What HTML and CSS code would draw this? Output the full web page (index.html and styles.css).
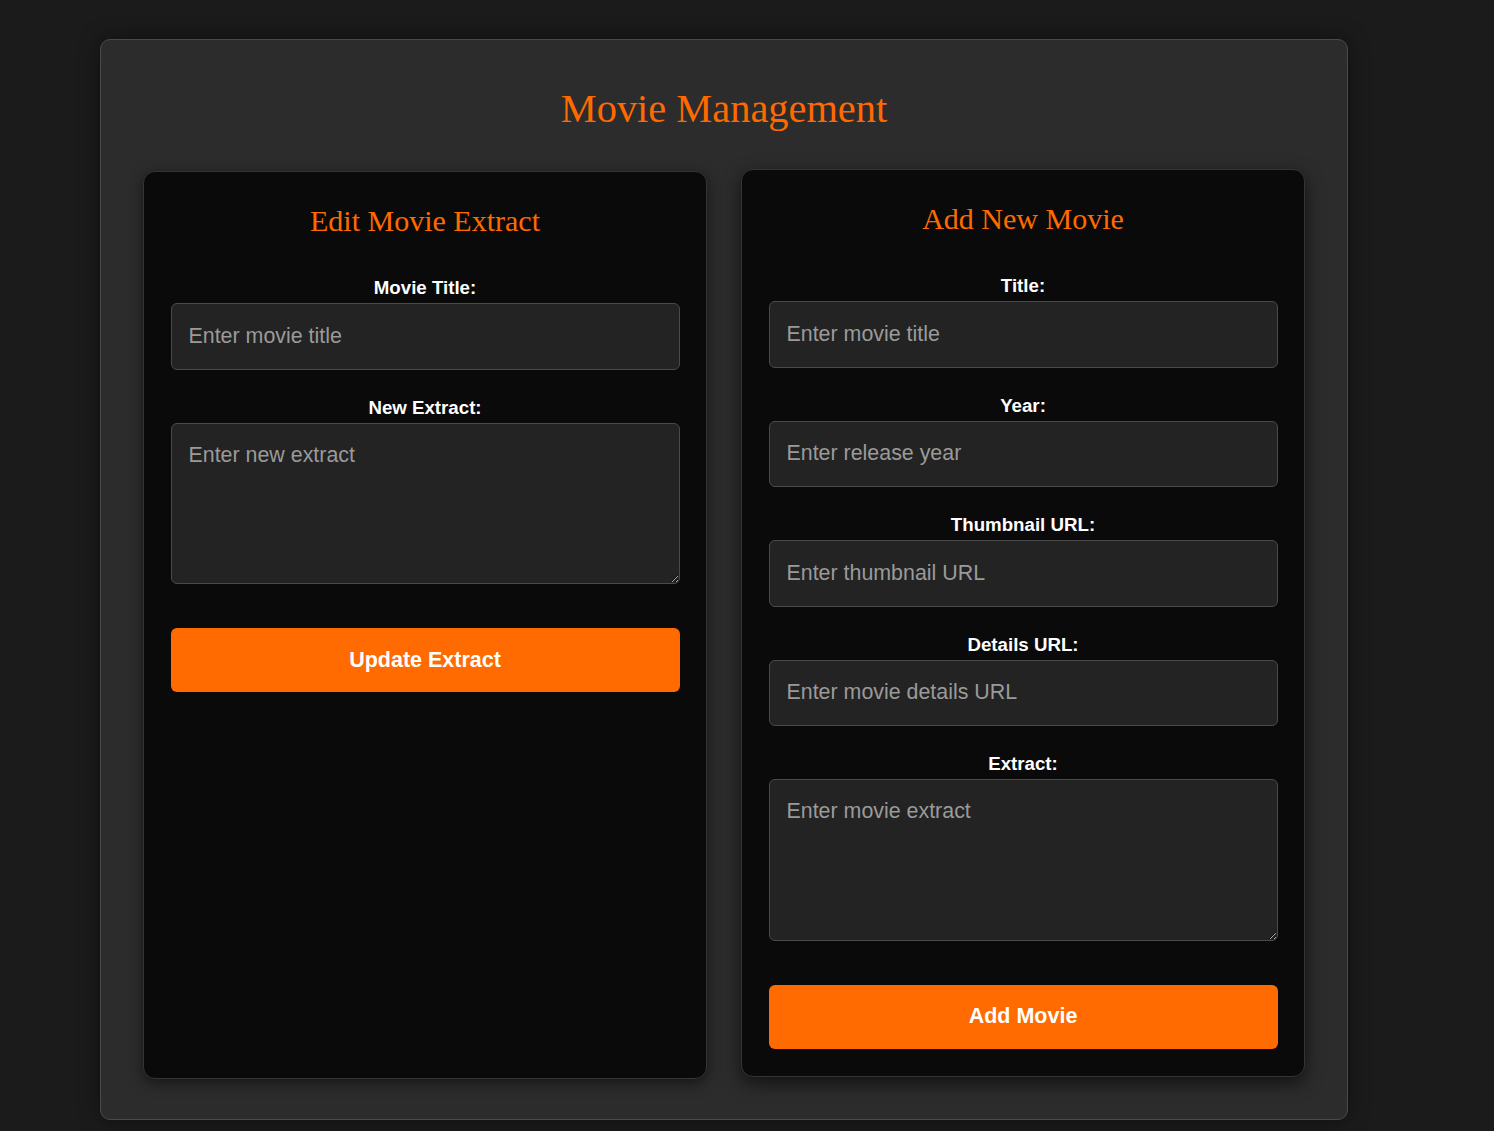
FILE: index.html
```html
<!DOCTYPE html>
<html lang="en">
<head>
<meta charset="utf-8">
<title>Movie Management</title>
<link rel="stylesheet" href="styles.css">
</head>
<body>
<div class="container">
  <h1 class="page-title">Movie Management</h1>
  <div class="panels">
    <section class="card">
      <h2 class="card-title">Edit Movie Extract</h2>
      <form class="form">
        <div class="group">
          <label class="label" for="edit-title">Movie Title:</label>
          <input class="field" id="edit-title" type="text" placeholder="Enter movie title">
        </div>
        <div class="group">
          <label class="label" for="edit-extract">New Extract:</label>
          <textarea class="field area" id="edit-extract" placeholder="Enter new extract"></textarea>
        </div>
        <button class="btn" type="button">Update Extract</button>
      </form>
    </section>
    <section class="card raised">
      <h2 class="card-title">Add New Movie</h2>
      <form class="form">
        <div class="group">
          <label class="label" for="add-title">Title:</label>
          <input class="field" id="add-title" type="text" placeholder="Enter movie title">
        </div>
        <div class="group">
          <label class="label" for="add-year">Year:</label>
          <input class="field" id="add-year" type="text" placeholder="Enter release year">
        </div>
        <div class="group">
          <label class="label" for="add-thumb">Thumbnail URL:</label>
          <input class="field" id="add-thumb" type="text" placeholder="Enter thumbnail URL">
        </div>
        <div class="group">
          <label class="label" for="add-details">Details URL:</label>
          <input class="field" id="add-details" type="text" placeholder="Enter movie details URL">
        </div>
        <div class="group">
          <label class="label" for="add-extract">Extract:</label>
          <textarea class="field area" id="add-extract" placeholder="Enter movie extract"></textarea>
        </div>
        <button class="btn" type="button">Add Movie</button>
      </form>
    </section>
  </div>
</div>
</body>
</html>
```
FILE: styles.css
```css
html, body {
  margin: 0;
  padding: 0;
}
body {
  background: #1b1b1b;
  font-family: "Liberation Sans", Arial, sans-serif;
  color: #ffffff;
  padding-top: 39px;
  height: 1131px;
  box-sizing: border-box;
  overflow: hidden;
}
.container {
  margin-left: 100px;
  width: 1248px;
  box-sizing: border-box;
  background: #2c2c2c;
  border: 1px solid #4a4a4a;
  border-radius: 10px;
  padding: 46px 42px 40px;
  box-shadow: 0 0 22px rgba(0, 0, 0, 0.45);
}
.page-title {
  margin: 0 0 39px;
  font-family: "Liberation Serif", "Times New Roman", serif;
  font-weight: normal;
  font-size: 40.4px;
  line-height: 46px;
  color: #ff6a00;
  text-align: center;
}
.panels {
  display: grid;
  grid-template-columns: 1fr 1fr;
  gap: 34px;
}
.card {
  background: #0a0a0a;
  border: 1px solid #343434;
  border-radius: 12px;
  padding: 32px 26.5px 27px;
  box-shadow: 0 4px 14px rgba(0, 0, 0, 0.5);
}
.card.raised {
  transform: translateY(-2px);
  box-shadow: 0 6px 18px rgba(0, 0, 0, 0.6);
}
.card-title {
  margin: 0 0 39px;
  font-family: "Liberation Serif", "Times New Roman", serif;
  font-weight: normal;
  font-size: 30px;
  line-height: 34px;
  color: #ff6a00;
  text-align: center;
}
.form {
  display: flex;
  flex-direction: column;
}
.group {
  display: flex;
  flex-direction: column;
  margin-bottom: 27px;
}
.label {
  display: block;
  font-weight: bold;
  font-size: 18.7px;
  line-height: 21px;
  margin-bottom: 5px;
  text-align: center;
  color: #ffffff;
}
.field {
  display: block;
  box-sizing: border-box;
  width: 100%;
  height: 66.5px;
  margin: 0;
  padding: 20px 17px;
  background: #232323;
  border: 1px solid #4a4a4a;
  border-radius: 6px;
  color: #ffffff;
  font-family: "Liberation Sans", Arial, sans-serif;
  font-size: 21.4px;
  line-height: 24px;
  outline: none;
}
.field::placeholder {
  color: #9a9a9a;
  opacity: 1;
}
.area {
  height: 161.5px;
  padding-top: 19px;
  resize: vertical;
}
.group:last-of-type {
  margin-bottom: 44px;
}
.btn {
  display: block;
  width: 100%;
  height: 64px;
  margin: 0;
  border: none;
  border-radius: 6px;
  background: #ff6b00;
  color: #ffffff;
  font-family: "Liberation Sans", Arial, sans-serif;
  font-weight: bold;
  font-size: 21.5px;
  cursor: pointer;
}
```
